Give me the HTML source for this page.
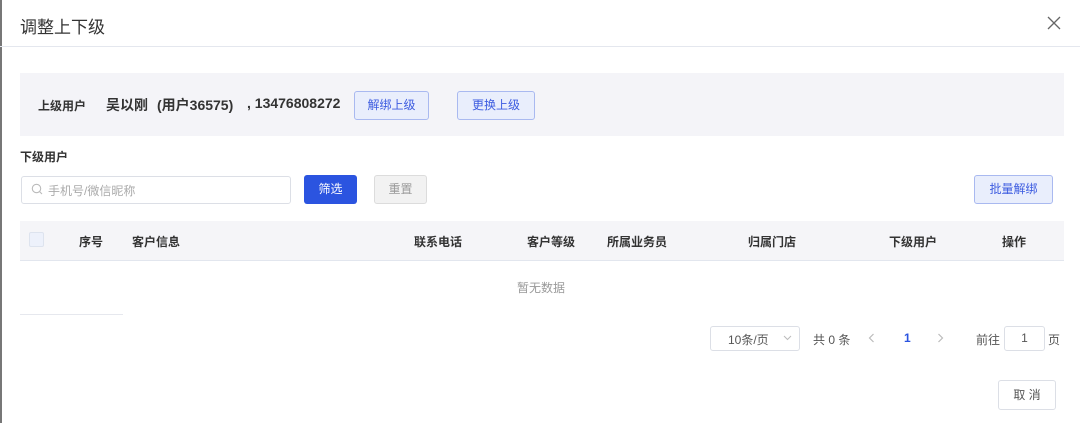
<!DOCTYPE html>
<html><head><meta charset="utf-8"><style>
*{margin:0;padding:0;box-sizing:border-box}
body{width:1080px;height:423px;background:#fff;font-family:"Liberation Sans","Noto Sans CJK SC",sans-serif;color:#333;position:relative;overflow:hidden;font-size:12px}
.a{position:absolute;white-space:nowrap}
.btn{position:absolute;border:1px solid #a9b9f0;background:#e9eefc;color:#3d5ce0;border-radius:3px;text-align:center;font-size:12px}
.th{position:absolute;top:233px;font-weight:bold;font-size:12px;color:#333}
</style></head><body>
<div class="a" style="left:0;top:0;width:2px;height:423px;background:#777"></div>
<div class="a" style="left:20px;top:13px;font-size:17px;color:#333">调整上下级</div>
<svg class="a" style="left:1047px;top:16px" width="14" height="14"><path d="M1 1L13 13M13 1L1 13" stroke="#666" stroke-width="1.3"/></svg>
<div class="a" style="left:0;top:46px;width:1080px;height:1px;background:#e4e7ee"></div>
<div class="a" style="left:20px;top:73px;width:1044px;height:63px;background:#f4f4f8"></div>
<div class="a" style="left:38px;top:97px;font-size:12px;font-weight:bold;color:#333">上级用户</div>
<div class="a" style="left:106px;top:95px;font-size:14px;font-weight:bold;color:#333">吴以刚</div>
<div class="a" style="left:157px;top:95px;font-size:14px;font-weight:bold;color:#333">(用户36575)</div>
<div class="a" style="left:247px;top:95px;font-size:14px;font-weight:bold;color:#333">, 13476808272</div>
<div class="btn" style="left:354px;top:91px;width:75px;height:29px;line-height:27px">解绑上级</div>
<div class="btn" style="left:457px;top:91px;width:78px;height:29px;line-height:27px">更换上级</div>
<div class="a" style="left:20px;top:148px;font-weight:bold;font-size:12px">下级用户</div>
<div class="a" style="left:21px;top:176px;width:270px;height:28px;border:1px solid #dcdfe6;border-radius:3px"></div>
<svg class="a" style="left:31px;top:183px" width="12" height="12"><circle cx="5.5" cy="5.5" r="4.2" fill="none" stroke="#bbb" stroke-width="1.1"/><path d="M8.6 8.6L11 11" stroke="#bbb" stroke-width="1.1"/></svg>
<div class="a" style="left:48px;top:182px;color:#aaa;font-size:12px">手机号/微信昵称</div>
<div class="a" style="left:304px;top:175px;width:53px;height:29px;background:#2b54e0;border-radius:3px;color:#fff;text-align:center;line-height:29px">筛选</div>
<div class="a" style="left:374px;top:175px;width:53px;height:29px;background:#f2f2f2;border:1px solid #dcdcdc;border-radius:3px;color:#999;text-align:center;line-height:27px">重置</div>
<div class="btn" style="left:974px;top:175px;width:79px;height:29px;line-height:27px">批量解绑</div>
<div class="a" style="left:20px;top:221px;width:1044px;height:40px;background:#f5f5f8;border-bottom:1px solid #e2e6ee"></div>
<div class="a" style="left:29px;top:232px;width:15px;height:15px;border:1px solid #dde3ee;background:#edf1fb;border-radius:2px"></div>
<div class="th" style="left:79px">序号</div>
<div class="th" style="left:132px">客户信息</div>
<div class="th" style="left:414px">联系电话</div>
<div class="th" style="left:527px">客户等级</div>
<div class="th" style="left:607px">所属业务员</div>
<div class="th" style="left:748px">归属门店</div>
<div class="th" style="left:889px">下级用户</div>
<div class="th" style="left:1002px">操作</div>
<div class="a" style="left:517px;top:279px;color:#999">暂无数据</div>
<div class="a" style="left:20px;top:314px;width:103px;height:1px;background:#e6e8ee"></div>
<div class="a" style="left:710px;top:326px;width:90px;height:25px;border:1px solid #dcdfe6;border-radius:3px"></div>
<div class="a" style="left:728px;top:331px;color:#555">10条/页</div>
<svg class="a" style="left:783px;top:335px" width="9" height="6"><path d="M1 1L4.5 4.5L8 1" fill="none" stroke="#bbb"/></svg>
<div class="a" style="left:813px;top:331px;color:#555">共 0 条</div>
<svg class="a" style="left:868px;top:333px" width="7" height="10"><path d="M5.5 1L1.5 5L5.5 9" fill="none" stroke="#bbb" stroke-width="1.2"/></svg>
<div class="a" style="left:904px;top:331px;color:#2b54e0;font-weight:bold">1</div>
<svg class="a" style="left:937px;top:333px" width="7" height="10"><path d="M1.5 1L5.5 5L1.5 9" fill="none" stroke="#bbb" stroke-width="1.2"/></svg>
<div class="a" style="left:976px;top:331px;color:#555">前往</div>
<div class="a" style="left:1004px;top:326px;width:41px;height:25px;border:1px solid #dcdfe6;border-radius:3px;text-align:center;line-height:23px;color:#555">1</div>
<div class="a" style="left:1048px;top:331px;color:#555">页</div>
<div class="a" style="left:998px;top:380px;width:58px;height:30px;border:1px solid #dcdfe6;border-radius:3px;text-align:center;line-height:28px;color:#555">取 消</div>
</body></html>
